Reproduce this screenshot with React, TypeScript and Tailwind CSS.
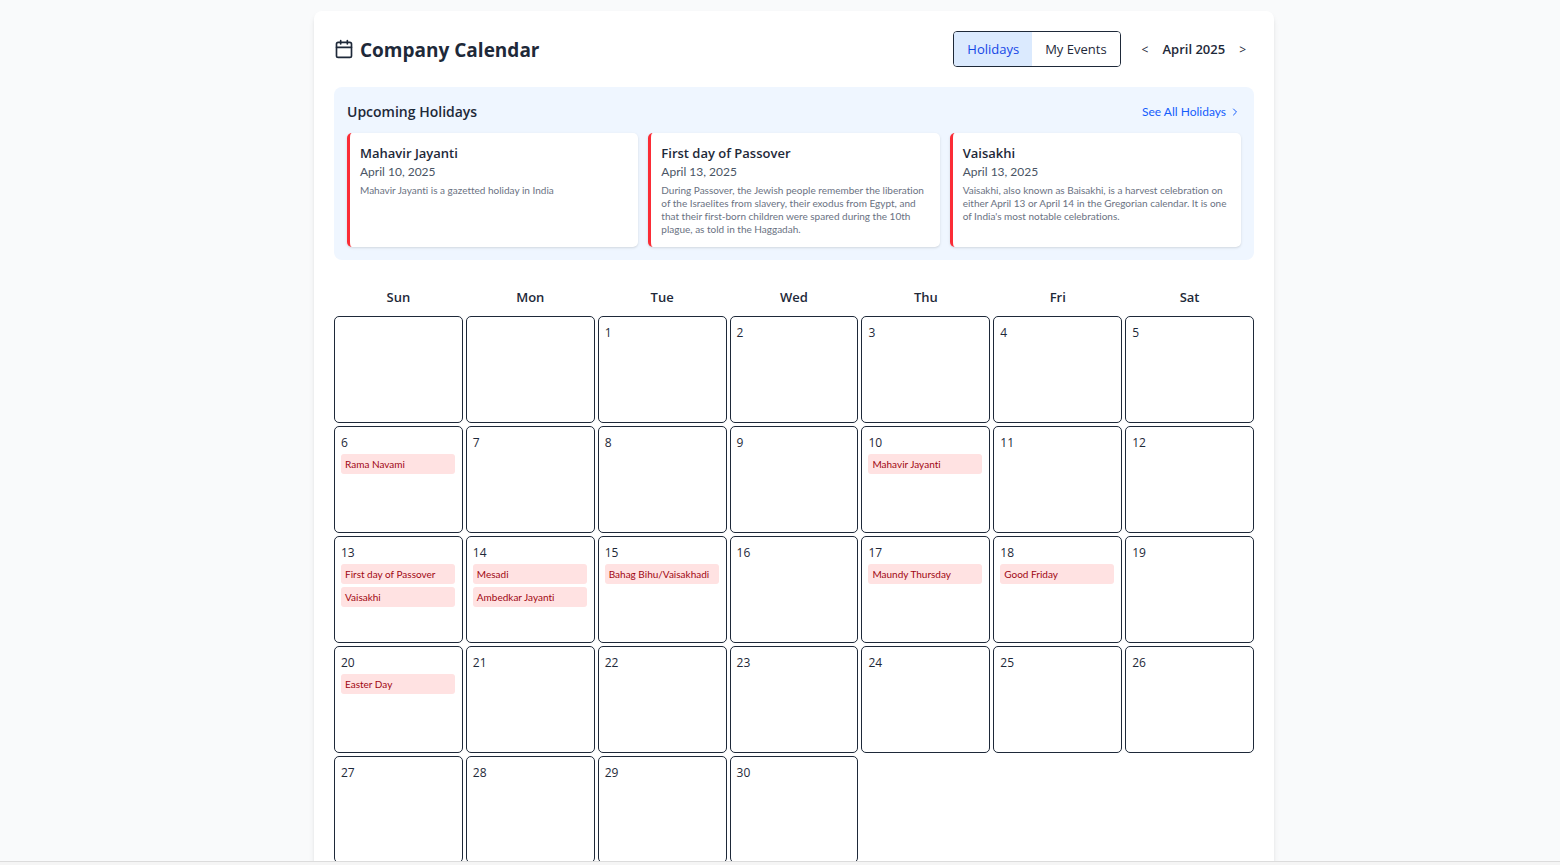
import { useState } from "react";
import { Calendar, ChevronRight } from "lucide-react";

type Holiday = { name: string; date: string; description: string };

const upcoming: Holiday[] = [
  {
    name: "Mahavir Jayanti",
    date: "April 10, 2025",
    description: "Mahavir Jayanti is a gazetted holiday in India",
  },
  {
    name: "First day of Passover",
    date: "April 13, 2025",
    description:
      "During Passover, the Jewish people remember the liberation of the Israelites from slavery, their exodus from Egypt, and that their first-born children were spared during the 10th plague, as told in the Haggadah.",
  },
  {
    name: "Vaisakhi",
    date: "April 13, 2025",
    description:
      "Vaisakhi, also known as Baisakhi, is a harvest celebration on either April 13 or April 14 in the Gregorian calendar. It is one of India's most notable celebrations.",
  },
];

const weekdays = ["Sun", "Mon", "Tue", "Wed", "Thu", "Fri", "Sat"];

const events: Record<number, string[]> = {
  6: ["Rama Navami"],
  10: ["Mahavir Jayanti"],
  13: ["First day of Passover", "Vaisakhi"],
  14: ["Mesadi", "Ambedkar Jayanti"],
  15: ["Bahag Bihu/Vaisakhadi"],
  17: ["Maundy Thursday"],
  18: ["Good Friday"],
  20: ["Easter Day"],
};

// April 2025 starts on a Tuesday.
const leadingBlanks = 2;
const cells: (number | null)[] = [
  ...Array.from({ length: leadingBlanks }, () => null),
  ...Array.from({ length: 30 }, (_, i) => i + 1),
];

function HolidayCard({ name, date, description }: Holiday) {
  return (
    <article className="rounded-[5px] border-l-3 border-[#fb2c36] bg-white px-[10px] pt-[11px] pb-[10px] shadow-sm">
      <h3 className="text-[13px] leading-[19px] font-semibold">{name}</h3>
      <p className="font-['Lato','Open_Sans',sans-serif] text-[12px] leading-[18px] text-[#4a5565]">{date}</p>
      <p className="mt-[3px] font-['Lato','Open_Sans',sans-serif] text-[10px] leading-[13px] text-[#6a7282]">
        {description}
      </p>
    </article>
  );
}

function DayCell({ day }: { day: number | null }) {
  return (
    <div className="h-[107px] min-w-0 rounded-[5px] border border-[#1e2939] pt-[7px] pr-[7px] pl-[6px]">
      {day !== null && (
        <>
          <div className="text-[12px] leading-[18px] font-medium">{day}</div>
          <ul className="mt-[2px] flex flex-col gap-[3px]">
            {(events[day] ?? []).map((e) => (
              <li
                key={e}
                className="truncate rounded-[3px] bg-[#ffe2e2] px-[4px] font-['Lato','Open_Sans',sans-serif] text-[10px] leading-[20px] text-[#9f0712]"
              >
                {e}
              </li>
            ))}
          </ul>
        </>
      )}
    </div>
  );
}

export default function App() {
  const [tab, setTab] = useState<"holidays" | "events">("holidays");
  const tabClass = (active: boolean) =>
    active ? "bg-[#dbeafe] px-[13px] pt-[2px] text-[#1447e6]" : "bg-white px-[13px] pt-[2px]";

  return (
    <div className="flex h-screen flex-col bg-[#f9fafb] font-['Open_Sans','Noto_Sans',sans-serif] text-[#1e2939] [font-variant-ligatures:none]">
      <main className="min-h-0 flex-1 overflow-y-auto pt-[11px] pl-7 [scrollbar-width:none]">
        <div className="mx-auto w-full max-w-[960px] rounded-lg bg-white p-5 shadow-md">
          <header className="flex items-center justify-between">
            <h1 className="flex items-center gap-[6px] text-[19px] leading-[26px] font-bold">
              <Calendar className="size-5" strokeWidth={2} aria-hidden="true" />
              <span className="pt-[2px]">Company Calendar</span>
            </h1>
            <div className="flex items-center gap-[13px]">
              <div className="flex h-9 overflow-hidden rounded-[4px] border border-[#1e2939] text-[13px]">
                <button type="button" className={tabClass(tab === "holidays")} onClick={() => setTab("holidays")}>
                  Holidays
                </button>
                <button type="button" className={tabClass(tab === "events")} onClick={() => setTab("events")}>
                  My Events
                </button>
              </div>
              <div className="flex items-center gap-[6px] pt-[2px] text-[13px]">
                <button type="button" aria-label="Previous month" className="px-2 text-[12px]">
                  &lt;
                </button>
                <span className="font-semibold">April 2025</span>
                <button type="button" aria-label="Next month" className="px-2 text-[12px]">
                  &gt;
                </button>
              </div>
            </div>
          </header>

          <section className="mt-5 rounded-lg bg-[#eff6ff] p-[13px]">
            <div className="flex h-6 items-center justify-between">
              <h2 className="text-[14px] leading-[20px] font-semibold">Upcoming Holidays</h2>
              <a
                href="#holidays"
                className="flex items-center gap-[3px] font-['Lato','Open_Sans',sans-serif] text-[12px] text-[#155dfc]"
              >
                See All Holidays
                <ChevronRight className="size-3" aria-hidden="true" />
              </a>
            </div>
            <div className="mt-[9px] grid min-h-[114px] grid-cols-3 gap-[10px]">
              {upcoming.map((h) => (
                <HolidayCard key={h.name} {...h} />
              ))}
            </div>
          </section>

          <section className="mt-5">
            <div className="grid grid-cols-7 gap-[3px] pb-[2px] text-center text-[13px] leading-[34px] font-semibold">
              {weekdays.map((d) => (
                <div key={d}>{d}</div>
              ))}
            </div>
            <div className="grid grid-cols-7 gap-[3px]">
              {cells.map((day, i) => (
                <DayCell key={i} day={day} />
              ))}
            </div>
          </section>
        </div>
      </main>
      <footer className="h-1 shrink-0 border-t border-[#dcdcdc] bg-[#f5f5f5]" />
    </div>
  );
}
